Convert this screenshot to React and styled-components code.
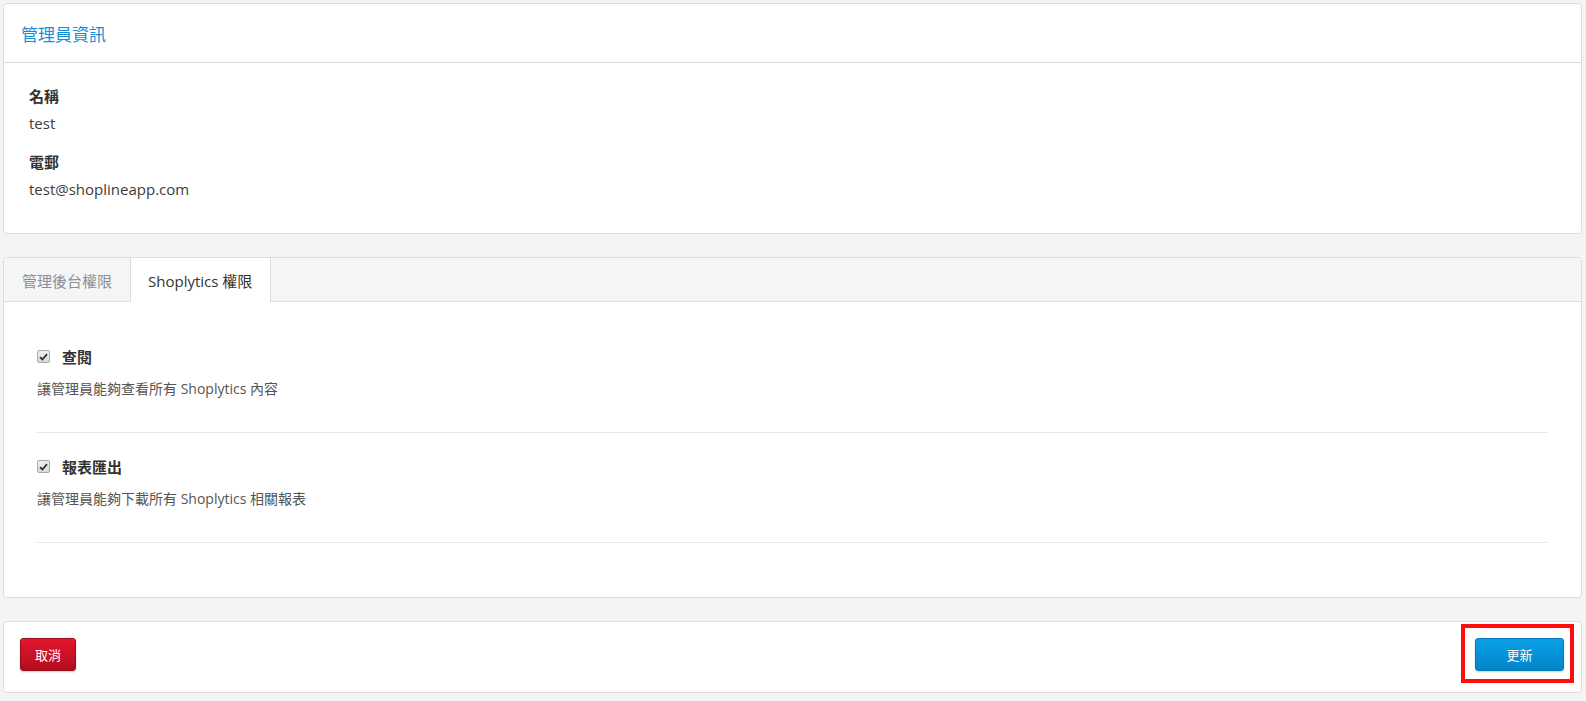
import React from "react";
import styled, { createGlobalStyle } from "styled-components";

const GlobalStyle = createGlobalStyle`
  html, body {
    margin: 0;
    padding: 0;
    background: #f4f4f4;
    font-family: "Open Sans", "Noto Sans CJK TC", sans-serif;
    color: #333;
  }
`;

const Page = styled.div`
  padding: 3px 4px 8px 3px;
  display: flex;
  flex-direction: column;
  gap: 23px;
`;

const Card = styled.div`
  background: #fff;
  border: 1px solid #dcdcdc;
  border-radius: 4px;
  overflow: hidden;
`;

const CardHeader = styled.div`
  height: 58px;
  display: flex;
  align-items: center;
  padding-left: 17px;
  border-bottom: 1px solid #d9d9d9;
`;

const CardTitle = styled.h3`
  margin: 0;
  font-size: 17px;
  font-weight: 400;
  color: #138ed8;
`;

const InfoBody = styled.div`
  padding: 23px 25px 34px;
  display: flex;
  flex-direction: column;
  gap: 19px;
`;

const Field = styled.div`
  display: flex;
  flex-direction: column;
  gap: 7px;
`;

const FieldLabel = styled.div`
  font-size: 15px;
  line-height: 20px;
  font-weight: 700;
  color: #333;
`;

const FieldValue = styled.div`
  font-size: 15px;
  line-height: 20px;
  color: #3c3c3c;
`;

const TabBar = styled.div`
  display: flex;
  height: 43px;
  background: #f5f5f5;
  border-bottom: 1px solid #dcdcdc;
`;

const Tab = styled.div`
  display: flex;
  align-items: center;
  padding: 0 18px 0 17px;
  font-size: 15px;
  color: ${(p) => (p.$active ? "#333" : "#8a8f96")};
  background: ${(p) => (p.$active ? "#fff" : "transparent")};
  border-left: 1px solid ${(p) => (p.$active ? "#dcdcdc" : "transparent")};
  border-right: 1px solid ${(p) => (p.$active ? "#dcdcdc" : "transparent")};
  margin-bottom: -1px;
  margin-left: ${(p) => (p.$first ? "0" : "-1px")};
  height: 44px;
  box-sizing: border-box;
`;

const PermList = styled.div`
  padding: 21px 33px 54px;
`;

const PermItem = styled.div`
  padding: 24px 0 33px;
  border-bottom: 1px solid #e6e6e6;
  display: flex;
  flex-direction: column;
  gap: 12px;
`;

const PermTitleRow = styled.label`
  display: flex;
  align-items: center;
  gap: 12px;
  font-size: 15px;
  line-height: 20px;
  font-weight: 700;
  color: #333;
`;

const CheckBox = styled.span`
  width: 11px;
  height: 11px;
  border: 1px solid #a9a9a9;
  border-radius: 2px;
  background: linear-gradient(#f0f0f0, #d9d9d9);
  display: inline-flex;
  align-items: center;
  justify-content: center;
  margin-top: -1px;
`;

const PermDesc = styled.div`
  font-size: 14px;
  line-height: 20px;
  color: #555;
`;

const Footer = styled.div`
  display: flex;
  justify-content: space-between;
  align-items: center;
  padding: 16px 17px 21px 16px;
`;

const Button = styled.button`
  position: relative;
  height: 33px;
  min-width: ${(p) => (p.$primary ? "89px" : "56px")};
  padding: 0 14px;
  border: 1px solid ${(p) => (p.$primary ? "#0679b8" : "#9c0d1c")};
  border-radius: 3px;
  color: #fff;
  font-family: "Open Sans", "Noto Sans CJK TC", sans-serif;
  font-size: 13px;
  background: ${(p) =>
    p.$primary
      ? "linear-gradient(#0aa0e6, #0284c8)"
      : "linear-gradient(#e3172d, #b40c1f)"};
  box-shadow: 0 1px 2px rgba(0, 0, 0, 0.2);
`;

const Highlight = styled.span`
  position: absolute;
  left: -15px;
  right: -11px;
  top: -15px;
  bottom: -13px;
  border: 4px solid #ff0d0d;
  pointer-events: none;
`;

const permissions = [
  { title: "查閱", desc: "讓管理員能夠查看所有 Shoplytics 內容" },
  { title: "報表匯出", desc: "讓管理員能夠下載所有 Shoplytics 相關報表" },
];

function Check() {
  return (
    <CheckBox>
      <svg width="9" height="8" viewBox="0 0 9 8">
        <path d="M1 4.2 L3.4 6.5 L8 1.2" fill="none" stroke="#333" strokeWidth="1.8" />
      </svg>
    </CheckBox>
  );
}

export default function App() {
  return (
    <>
      <GlobalStyle />
      <Page>
        <Card>
          <CardHeader>
            <CardTitle>管理員資訊</CardTitle>
          </CardHeader>
          <InfoBody>
            <Field>
              <FieldLabel>名稱</FieldLabel>
              <FieldValue>test</FieldValue>
            </Field>
            <Field>
              <FieldLabel>電郵</FieldLabel>
              <FieldValue>test@shoplineapp.com</FieldValue>
            </Field>
          </InfoBody>
        </Card>

        <Card>
          <TabBar>
            <Tab $first>管理後台權限</Tab>
            <Tab $active>Shoplytics 權限</Tab>
          </TabBar>
          <PermList>
            {permissions.map((p) => (
              <PermItem key={p.title}>
                <PermTitleRow>
                  <Check />
                  {p.title}
                </PermTitleRow>
                <PermDesc>{p.desc}</PermDesc>
              </PermItem>
            ))}
          </PermList>
        </Card>

        <Card>
          <Footer>
            <Button>取消</Button>
            <Button $primary>
              更新
              <Highlight />
            </Button>
          </Footer>
        </Card>
      </Page>
    </>
  );
}
